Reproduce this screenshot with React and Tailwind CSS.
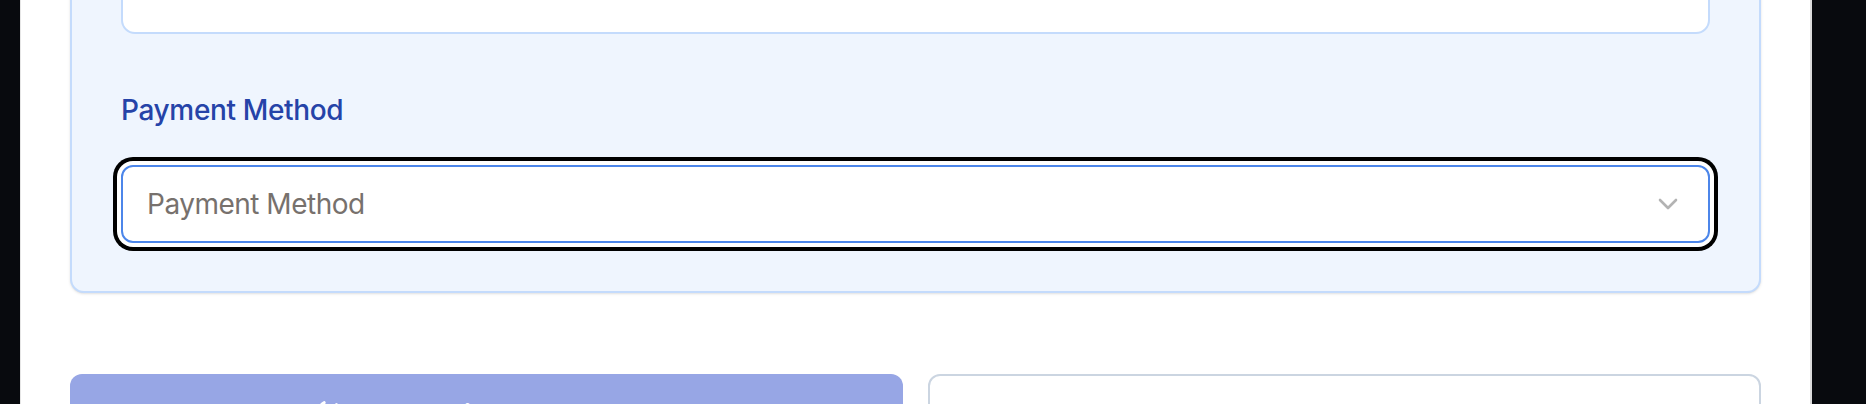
import { LoaderCircle } from "lucide-react";

function ChevronIcon() {
  return (
    <svg width="22" height="14" viewBox="0 0 22 14" fill="none" className="shrink-0">
      <polyline
        points="3,3 11,11 19,3"
        stroke="#b3b3b3"
        strokeWidth="2.6"
        strokeLinecap="round"
        strokeLinejoin="round"
      />
    </svg>
  );
}

export default function App() {
  return (
    <div className="flex h-[404px] w-[1866px] overflow-hidden bg-[#080a0e] font-['Inter',sans-serif]">
      <div className="w-5 shrink-0" />
      <div className="w-[1792px] shrink-0 border-l border-r-2 border-l-[#e6e6e6] border-r-[#dcdcdc] bg-white px-[49px]">
        <div className="-mt-[137px] rounded-[14px] border-2 border-[#c4dbfc] bg-[#eff5fe] px-[49px] pb-[48px] pt-[49px] shadow-sm">
          <div className="h-[120px] rounded-[14px] border-2 border-[#c4dbfc] bg-white" />

          <label className="mt-[55px] block text-[28px] font-medium leading-[42px] tracking-[-0.35px] text-[#2543a8]">
            Payment Method
          </label>

          <div className="mt-[34px] flex h-[78px] items-center justify-between rounded-[12px] border-2 border-[#4c86ea] bg-white pl-[24px] pr-[29px] ring-4 ring-black ring-offset-4 ring-offset-white">
            <span className="text-[28px] leading-[42px] tracking-[-0.5px] text-[#77716d]">Payment Method</span>
            <ChevronIcon />
          </div>
        </div>

        <div className="mt-[81px] grid grid-cols-2 gap-[25px]">
          <button
            type="button"
            disabled
            className="flex h-[100px] items-start justify-center gap-3 rounded-[12px] border-2 border-transparent bg-[#97a6e5] pt-[18px] text-[28px] font-semibold leading-[42px] text-white"
          >
            <LoaderCircle size={28} strokeWidth={2.5} className="mt-[4px] -rotate-45" />
            <span>Processing Payment...</span>
          </button>
          <button
            type="button"
            className="flex h-[100px] items-start justify-center rounded-[12px] border-2 border-[#cbd5e1] bg-white pt-[19px] text-[28px] font-semibold leading-[42px] text-[#374151]"
          >
            Back
          </button>
        </div>
      </div>
    </div>
  );
}
